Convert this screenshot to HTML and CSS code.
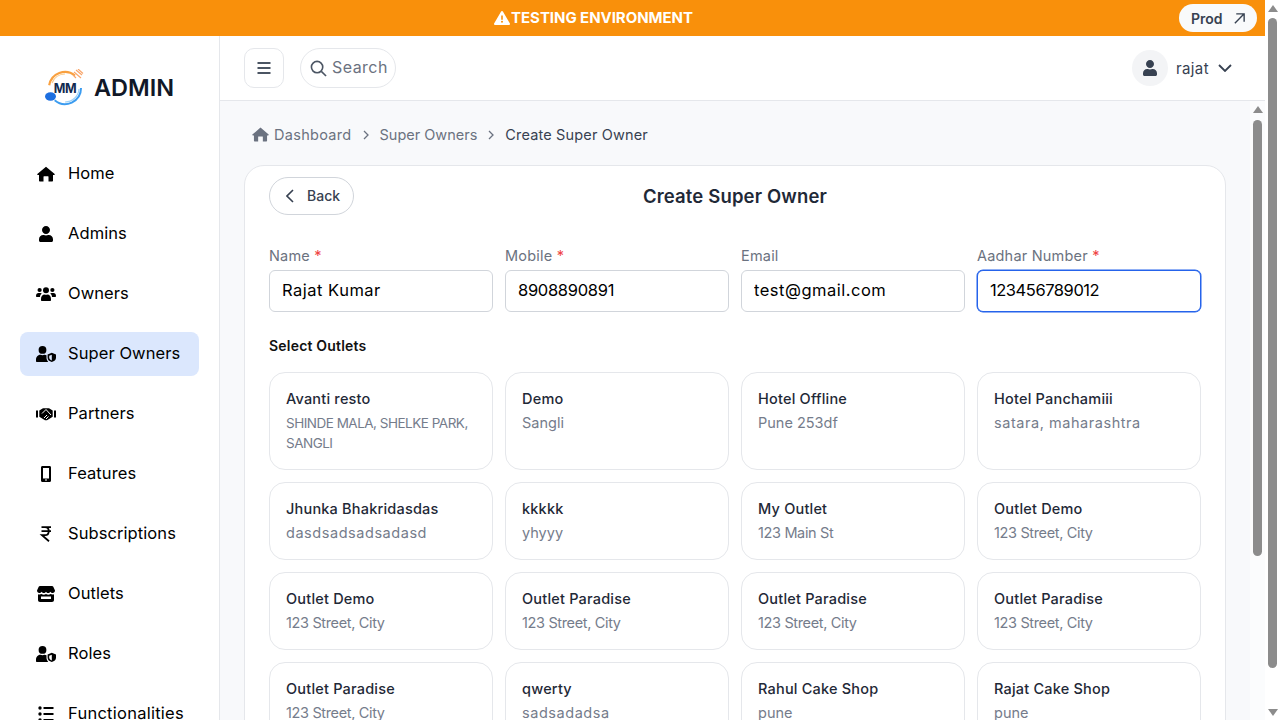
FILE: index.html
```html
<!DOCTYPE html>
<html lang="en">
<head>
    <meta charset="UTF-8">
    <title>Create Super Owner</title>
    <link rel="stylesheet" href="styles.css">
</head>
<body>
<svg width="0" height="0" class="defs">
    <symbol id="i-user" viewBox="0 0 448 512"><path d="M224 256c70.700 0 128-57.300 128-128S294.700 0 224 0 96 57.300 96 128s57.300 128 128 128zm89.600 32h-16.700c-22.200 10.200-46.900 16-72.900 16s-50.600-5.800-72.900-16h-16.700C60.200 288 0 348.200 0 422.400V464c0 26.500 21.500 48 48 48h352c26.500 0 48-21.500 48-48v-41.600c0-74.200-60.200-134.400-134.400-134.400z"/></symbol>
    <symbol id="i-home" viewBox="0 0 576 512"><path d="M288 20L566 258c10 10 2 28-14 28H512V468c0 14-10 24-24 24H368V340c0-10-6-16-16-16H224c-10 0-16 6-16 16V492H88c-14 0-24-10-24-24V286H24c-16 0-24-18-14-28z"/></symbol>
    <symbol id="i-shield" viewBox="0 0 20 16"><circle cx="6.500" cy="3.900" r="3.900"/><path d="M0 15v-1.500C0 10.500 2.400 8.800 4.500 8.800c1.300.5 2.700.5 4 0 .7 0 1.400.2 2 .5v2.500c0 1.300.5 2.700 1.700 4.200H1c-.6 0-1-.4-1-1z"/><path fill-rule="evenodd" d="M15.800 6.800l4.200 1.600v3.400c0 2.100-1.700 3.600-4.200 4.200-2.500-.6-4.200-2.100-4.200-4.200V8.400zm0 1.900l-2.600 1v2.100c0 1.200 1.100 2.100 2.600 2.600z"/></symbol>
</svg>

<div class="page">
    <div class="app">
        <div class="banner">
            <div class="banner-text">
                <svg class="warn" viewBox="0 0 16 14"><path fill-rule="evenodd" d="M8 0c.4 0 .7.2.9.5l7 12c.4.700-.1 1.500-.9 1.500H1c-.8 0-1.300-.8-.9-1.500l7-12C7.300.2 7.600 0 8 0zM7.200 4.500v4.300h1.600V4.500zM8 9.700a1 1 0 1 0 0 2 1 1 0 0 0 0-2z"/></svg>
                TESTING ENVIRONMENT
            </div>
            <a class="prod">Prod
                <svg viewBox="0 0 14 14"><path d="M2 12L12 2M3.500 2H12v8.500"/></svg>
            </a>
        </div>

        <div class="below">
            <div class="sidebar">
                <div class="logo">
                    <svg class="logo-mark" viewBox="0 0 40 38">
                        <path class="arc-o" d="M4.200 16.200A16 16 0 0 1 30 6.500"/>
                        <path class="arc-o2" d="M7 14A14 14 0 0 1 20 5"/>
                        <path class="fork" d="M29 3l7 6M31 1l6 5M33 0l5 4.500M28 6l3 3"/>
                        <path class="arc-b" d="M36 19A16 16 0 0 1 9.700 31.300"/>
                        <path class="arc-b2" d="M34 20A14 14 0 0 1 20 33"/>
                        <ellipse class="spoon" cx="5.500" cy="27.500" rx="5.500" ry="4.200"/>
                        <text x="20" y="23.500" class="logo-mm">MM</text>
                    </svg>
                    <span>ADMIN</span>
                </div>
                <nav class="menu">
                    <a class="menu-item"><svg class="ic" viewBox="0 0 576 512"><use href="#i-home"/></svg>Home</a>
                    <a class="menu-item"><svg class="ic" viewBox="0 0 448 512"><use href="#i-user"/></svg>Admins</a>
                    <a class="menu-item"><svg class="ic" viewBox="0 0 20 16"><circle cx="3.600" cy="4" r="2.100"/><circle cx="16.400" cy="4" r="2.100"/><circle cx="10" cy="4.200" r="3"/><path d="M0 10c0-2 1-3 2.500-3h2c.5 0 1 .2 1.300.5C4.600 8.400 4 9.700 4 11H1c-.6 0-1-.4-1-1zM20 10c0-2-1-3-2.500-3h-2c-.5 0-1 .2-1.300.5 1.200.9 1.800 2.200 1.800 3.500h3c.6 0 1-.4 1-1zM5 13c0-3 1.700-4.500 3.500-4.500 1 .3 2 .3 3 0C13.300 8.500 15 10 15 13v1c0 .6-.4 1-1 1H6c-.6 0-1-.4-1-1z"/></svg>Owners</a>
                    <a class="menu-item active"><svg class="ic" viewBox="0 0 20 16"><use href="#i-shield"/></svg>Super Owners</a>
                    <a class="menu-item"><svg class="ic" viewBox="0 0 20 16"><path d="M0 4.500h2v7H0zM18 4.500h2v7h-2zM3.300 4.500L7 2.200h6l3.700 2.300v6.300L11 14.300H9L3.300 10.800z"/><path class="shake" d="M6 7.500L10 3.500l5 5.500M8 12l3-3M10 13l2.500-2.500"/></svg>Partners</a>
                    <a class="menu-item"><svg class="ic" viewBox="0 0 20 16"><path fill-rule="evenodd" d="M6.500 0h7c1 0 1.500.6 1.500 1.500v13c0 .9-.5 1.500-1.500 1.500h-7C5.500 16 5 15.400 5 14.500v-13C5 .6 5.500 0 6.500 0zM7 2v10.500h6V2zM9 13.500h2v1H9z"/></svg>Features</a>
                    <a class="menu-item"><svg class="ic" viewBox="0 0 20 16"><path class="rupee" d="M5.500 1.200h9.500M5.500 5.200h9.500M6 1.200h3c5 0 5 8 0 8H6l7 6"/></svg>Subscriptions</a>
                    <a class="menu-item"><svg class="ic" viewBox="0 0 20 16"><path fill-rule="evenodd" d="M4 0h12c.6 0 1 .2 1.300.8L19 4.500C19 6 18 7 16.700 7c-1 0-1.800-.5-2.300-1.300C13.900 6.500 13 7 12.200 7c-.9 0-1.700-.5-2.200-1.300C9.500 6.500 8.700 7 7.800 7c-.8 0-1.700-.5-2.200-1.300C5.100 6.500 4.300 7 3.300 7 2 7 1 6 1 4.500L2.700.8C3 .2 3.400 0 4 0zM2 8.300c.9.400 2.400.4 3.500-.2 1.400.8 3 .8 4.500 0 1.500.8 3.100.8 4.500 0 1.100.6 2.600.6 3.500.2V14c0 1.200-.8 2-2 2H4c-1.200 0-2-.8-2-2zM5 10.500V13h10v-2.500z"/></svg>Outlets</a>
                    <a class="menu-item"><svg class="ic" viewBox="0 0 20 16"><use href="#i-shield"/></svg>Roles</a>
                    <a class="menu-item"><svg class="ic" viewBox="0 0 20 16"><circle cx="4" cy="2" r="1.700"/><circle cx="4" cy="8" r="1.700"/><circle cx="4" cy="14" r="1.700"/><path d="M7.500 1h10v2h-10zM7.500 7h10v2h-10zM7.500 13h10v2h-10z"/></svg><span class="menu-text">Functionalities</span></a>
                </nav>
            </div>

            <div class="main">
                <div class="topbar">
                    <button class="menu-btn"><svg viewBox="0 0 16 16"><path d="M1.500 3h13M1.500 8h13M1.500 13h13"/></svg></button>
                    <div class="search">
                        <svg viewBox="0 0 18 18"><circle cx="7.500" cy="7.500" r="6"/><path d="M12 12l5 5"/></svg>
                        <span>Search</span>
                    </div>
                    <div class="user">
                        <span class="avatar"><svg viewBox="0 0 448 512"><use href="#i-user"/></svg></span>
                        <span class="user-name">rajat</span>
                        <svg class="user-caret" viewBox="0 0 14 8"><path d="M1 1l6 6 6-6"/></svg>
                    </div>
                </div>

                <div class="body">
                    <div class="content">
                        <div class="crumbs">
                            <svg class="crumb-home" viewBox="0 0 576 512"><use href="#i-home"/></svg>
                            <span class="crumb-first">Dashboard</span>
                            <svg class="crumb-sep" viewBox="0 0 6 10"><path d="M1 1l4 4-4 4"/></svg>
                            <span>Super Owners</span>
                            <svg class="crumb-sep" viewBox="0 0 6 10"><path d="M1 1l4 4-4 4"/></svg>
                            <span class="crumb-now">Create Super Owner</span>
                        </div>

                        <div class="card">
                            <div class="card-head">
                                <button class="back"><svg viewBox="0 0 8 14"><path d="M7 1L1 7l6 6"/></svg>Back</button>
                                <h1>Create Super Owner</h1>
                            </div>

                            <div class="fields">
                                <div class="field">
                                    <label>Name <i>*</i></label>
                                    <input type="text" value="Rajat Kumar">
                                </div>
                                <div class="field">
                                    <label>Mobile <i>*</i></label>
                                    <input class="digits" type="text" value="8908890891">
                                </div>
                                <div class="field">
                                    <label>Email</label>
                                    <input type="text" value="test@gmail.com">
                                </div>
                                <div class="field">
                                    <label>Aadhar Number <i>*</i></label>
                                    <input class="digits focused" type="text" value="123456789012">
                                </div>
                            </div>

                            <h2>Select Outlets</h2>

                            <div class="outlets">
                                <div class="outlet"><b>Avanti resto</b><span class="caps">SHINDE MALA, SHELKE PARK, SANGLI</span></div>
                                <div class="outlet"><b>Demo</b><span>Sangli</span></div>
                                <div class="outlet"><b>Hotel Offline</b><span>Pune 253df</span></div>
                                <div class="outlet"><b>Hotel Panchamiii</b><span class="wide">satara, maharashtra</span></div>
                                <div class="outlet"><b>Jhunka Bhakridasdas</b><span class="wide">dasdsadsadsadasd</span></div>
                                <div class="outlet"><b>kkkkk</b><span>yhyyy</span></div>
                                <div class="outlet"><b>My Outlet</b><span class="tight">123 Main St</span></div>
                                <div class="outlet"><b>Outlet Demo</b><span class="tight">123 Street, City</span></div>
                                <div class="outlet"><b>Outlet Demo</b><span class="tight">123 Street, City</span></div>
                                <div class="outlet"><b>Outlet Paradise</b><span class="tight">123 Street, City</span></div>
                                <div class="outlet"><b>Outlet Paradise</b><span class="tight">123 Street, City</span></div>
                                <div class="outlet"><b>Outlet Paradise</b><span class="tight">123 Street, City</span></div>
                                <div class="outlet"><b>Outlet Paradise</b><span class="tight">123 Street, City</span></div>
                                <div class="outlet"><b>qwerty</b><span class="wide">sadsadadsa</span></div>
                                <div class="outlet"><b>Rahul Cake Shop</b><span>pune</span></div>
                                <div class="outlet"><b>Rajat Cake Shop</b><span>pune</span></div>
                            </div>
                        </div>
                    </div>

                    <div class="bar bar-inner">
                        <span class="bar-up"></span>
                        <span class="bar-thumb"></span>
                    </div>
                </div>
            </div>
        </div>
    </div>

    <div class="bar bar-outer">
        <span class="bar-up"></span>
        <span class="bar-thumb"></span>
        <span class="bar-down"></span>
    </div>
</div>
</body>
</html>
```

FILE: styles.css
```css
*{box-sizing: border-box;}
html,body{margin: 0; height: 720px; overflow: hidden;}
body{font-family: Inter, "Noto Sans", sans-serif; background: #fff; color: #111827;}
.defs{display: block; height: 0;}
svg{display: block; flex: none;}

.page{display: flex; height: 720px;}
.app{flex: 1; min-width: 0; display: flex; flex-direction: column;}

/* scrollbars */
.bar{width: 15px; display: flex; flex-direction: column; align-items: center; flex: none;}
.bar-outer{background: #fff; padding-top: 5px;}
.bar-inner{background: #fbfcfd; padding-top: 5px;}
.bar-up{width: 0; height: 0; border: 5px solid transparent; border-top: 0; border-bottom: 7px solid #8c8c8c;}
.bar-down{width: 0; height: 0; border: 5px solid transparent; border-bottom: 0; border-top: 7px solid #8c8c8c; margin-top: 41px;}
.bar-thumb{width: 9px; background: #8c8c8c; border-radius: 5px; margin-top: 6px;}
.bar-outer .bar-thumb{height: 650px;}
.bar-inner .bar-thumb{height: 436px; margin-top: 7px;}

/* banner */
.banner{height: 36px; background: #f9900b; display: flex; align-items: center; padding: 0 8px; flex: none;}
.banner-text{flex: 1; display: flex; align-items: center; justify-content: center; gap: 1px; padding-bottom: 1px; color: #fff; font-size: 15px; font-weight: 700; letter-spacing: -.05px;}
.warn{width: 16px; height: 14px; fill: #fff;}
.prod{width: 78px; height: 28px; border-radius: 14px; background: #f9fafb; display: flex; align-items: center; justify-content: space-between; padding: 0 11px 0 12px; font-size: 14px; font-weight: 600; color: #374151;}
.prod svg{width: 13px; height: 13px; fill: none; stroke: #374151; stroke-width: 1.500;}

.below{flex: 1; display: flex; min-height: 0;}

/* sidebar */
.sidebar{width: 220px; flex: none; border-right: 1px solid #e5e7eb; overflow: hidden;}
.logo{display: flex; gap: 9px; padding: 33px 0 0 45px; height: 116px; align-items: flex-start;}
.logo span{font-size: 23.500px; font-weight: 600; color: #111827; line-height: 38px;}
.logo-mark{width: 40px; height: 38px; fill: none;}
.arc-o{stroke: #f9a03f; stroke-width: 2.200;}
.arc-o2{stroke: #fbcb8b; stroke-width: 1.200;}
.fork{stroke: #f9a66b; stroke-width: 1.200;}
.arc-b{stroke: #3b9cf0; stroke-width: 2;}
.arc-b2{stroke: #9fd2f8; stroke-width: 1.200;}
.spoon{fill: #1d6fe0;}
.logo-mm{fill: #12294f; font-size: 12.500px; font-weight: 700; text-anchor: middle; letter-spacing: -.3px;}
.menu{display: flex; flex-direction: column; gap: 16px; padding: 0 20px;}
.menu-item{height: 44px; flex: none; display: flex; align-items: center; gap: 12px; padding: 0 0 2px 16px; border-radius: 8px; font-size: 16.500px; letter-spacing: .08px; color: #000;}
.menu-item.active{background: #dbe7fd;}
.menu-item .ic{margin-top: 2px;}
.menu-text{letter-spacing: .25px;}
.ic{width: 20px; height: 16px;}
.rupee{fill: none; stroke: #000; stroke-width: 1.800;}
.shake{fill: none; stroke: #fff; stroke-width: 1;}

/* topbar */
.main{flex: 1; min-width: 0; display: flex; flex-direction: column;}
.topbar{height: 65px; flex: none; border-bottom: 1px solid #e5e7eb; display: flex; align-items: center; padding: 0 33px 0 24px;}
.menu-btn{width: 40px; height: 40px; border: 1px solid #e5e7eb; border-radius: 10px; background: #fff; display: flex; align-items: center; justify-content: center; padding: 0;}
.menu-btn svg{width: 16px; height: 16px; stroke: #4b5563; stroke-width: 1.800;}
.search{margin-left: 16px; width: 96px; height: 40px; border: 1px solid #e5e7eb; border-radius: 20px; display: flex; align-items: center; gap: 5px; padding-left: 9px; font-size: 16px; color: #6b7280;}
.search span{letter-spacing: .45px; margin-bottom: 2px;}
.search svg{width: 17px; height: 17px; fill: none; stroke: #4b5563; stroke-width: 1.700;}
.user{margin-left: auto; display: flex; align-items: center;}
.avatar{width: 36px; height: 36px; border-radius: 50%; background: #f3f4f6; display: flex; align-items: center; justify-content: center;}
.avatar svg{width: 14px; height: 16px; fill: #374151;}
.user-name{margin-left: 8px; font-size: 15px; letter-spacing: .4px; color: #374151;}
.user-caret{width: 14px; height: 8px; margin-left: 9px; fill: none; stroke: #374151; stroke-width: 1.800;}

/* content */
.body{flex: 1; display: flex; min-height: 0;}
.content{flex: 1; min-width: 0; background: #f8f9fb; padding: 0 24px; overflow: hidden;}
.crumbs{height: 64px; padding: 3px 0 0 8px; display: flex; align-items: center; font-size: 14.500px; color: #6b7280;}
.crumb-home{width: 17px; height: 15px; fill: #6b7280; margin-right: 5px;}
.crumb-first{letter-spacing: .3px;}
.crumb-sep{width: 6px; height: 10px; margin: 0 11px; fill: none; stroke: #6b7280; stroke-width: 1.300;}
.crumb-now{color: #374151; letter-spacing: .15px;}

.card{background: #fff; border: 1px solid #e5e7eb; border-radius: 20px; padding: 11px 24px 24px;}
.card-head{position: relative; height: 38px; display: flex; align-items: center; justify-content: center;}
.card-head h1{margin: 0; font-size: 18.500px; font-weight: 600; letter-spacing: .15px; color: #1f2937;}
.back{position: absolute; left: 0; top: 0; width: 85px; height: 38px; border: 1px solid #d1d5db; border-radius: 19px; background: #fff; display: flex; align-items: center; gap: 13px; padding: 0 0 1px 16px; font-family: inherit; font-size: 14px; font-weight: 500; color: #374151;}
.back svg{width: 8px; height: 14px; fill: none; stroke: #374151; stroke-width: 1.600;}

.fields{display: grid; grid-template-columns: repeat(4, minmax(0, 1fr)); gap: 12px; margin-top: 31px;}
.field label{display: block; height: 24px; line-height: 20px; font-size: 14.500px; letter-spacing: .2px; color: #6b7280;}
.field label i{font-style: normal; color: #ef4444;}
.field input{display: block; width: 100%; height: 42px; border: 1px solid #d1d5db; border-radius: 6px; padding: 0 12px 2px; font-family: inherit; font-size: 16.500px; letter-spacing: .5px; color: #000; background: #fff; outline: 0;}
.field input.digits{letter-spacing: -.3px;}
.field input.focused{border-color: #2563eb; box-shadow: 0 0 0 .5px #2563eb; letter-spacing: -.45px;}

.card h2{margin: 24px 0 16px; font-size: 14px; line-height: 20px; font-weight: 600; letter-spacing: .2px; color: #111;}

.outlets{display: grid; grid-template-columns: repeat(4, minmax(0, 1fr)); gap: 12px;}
.outlet{min-height: 78px; border: 1px solid #e5e7eb; border-radius: 16px; padding: 16px;}
.outlet b{display: block; font-size: 14.500px; line-height: 20px; font-weight: 500; letter-spacing: .2px; color: #1f2937;}
.outlet span{display: block; margin-top: 4px; font-size: 14.500px; line-height: 20px; color: #757c8b;}
.outlet .caps{font-size: 13.500px; letter-spacing: -.5px;}
.outlet .wide{letter-spacing: .55px;}
.outlet .tight{letter-spacing: -.35px;}
```
